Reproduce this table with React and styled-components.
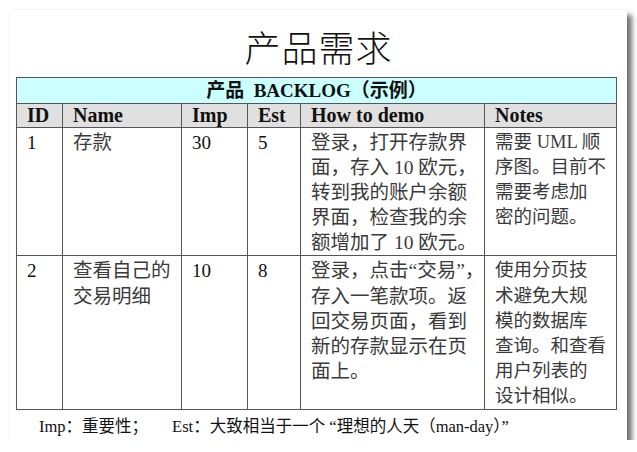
import styled, { createGlobalStyle } from "styled-components";

const GlobalStyle = createGlobalStyle`
  html, body {
    margin: 0;
    padding: 0;
    background: #ffffff;
  }
  body {
    padding-top: 10px;
    font-family: "Liberation Serif", "Noto Sans CJK SC", serif;
  }
`;

const Page = styled.div`
  margin-left: 10px;
  width: 617px;
  height: 430px;
  background: #ffffff;
  box-shadow: 5px 5px 5px rgba(0, 0, 0, 0.55), 0 0 2px rgba(0, 0, 0, 0.1);
  display: flex;
  flex-direction: column;
`;

const Title = styled.h1`
  margin: 0;
  height: 67px;
  display: flex;
  align-items: center;
  justify-content: center;
  padding-top: 4px;
  box-sizing: border-box;
  font-family: "Noto Sans CJK SC", sans-serif;
  font-weight: 300;
  font-size: 36px;
  color: #111;
  letter-spacing: 1px;
`;

const Table = styled.table`
  margin-left: 6px;
  width: 600px;
  border-collapse: collapse;
  table-layout: fixed;
  border: 1px solid #555;
`;

const Caption = styled.th`
  height: 25px;
  padding: 0;
  background: #ccffff;
  border: 1px solid #555;
  font-size: 19px;
  font-weight: bold;
  text-align: center;
  color: #111;
  line-height: 25px;
`;

const Head = styled.th`
  height: 23px;
  padding: 0 10px;
  background: #e0e0e0;
  border: 1px solid #555;
  font-size: 20px;
  font-weight: bold;
  text-align: left;
  color: #111;
  line-height: 23px;
`;

const Cell = styled.td`
  vertical-align: top;
  padding: 2px ${(p) => p.$right || 10}px 0 10px;
  border: 1px solid #555;
  font-size: ${(p) => p.$size || 19}px;
  line-height: 25.1px;
  color: #3a3a3a;
  white-space: nowrap;
`;

const Num = styled.span`
  color: #111;
`;

const Footer = styled.div`
  flex: 1;
  display: flex;
  align-items: center;
  padding-left: 29px;
  font-size: 16.5px;
  color: #111;
`;

const Note = styled.span`
  margin-left: ${(p) => p.$gap || 0}px;
  white-space: nowrap;
`;

const cols = [46, 119, 66, 53, 184, 132];

const rows = [
  {
    id: "1",
    name: ["存款"],
    imp: "30",
    est: "5",
    demo: [
      "登录，打开存款界",
      "面，存入 10 欧元，",
      "转到我的账户余额",
      "界面，检查我的余",
      "额增加了 10 欧元。",
    ],
    notes: ["需要 UML 顺", "序图。目前不", "需要考虑加", "密的问题。"],
  },
  {
    id: "2",
    name: ["查看自己的", "交易明细"],
    imp: "10",
    est: "8",
    demo: [
      "登录，点击“交易”，",
      "存入一笔款项。返",
      "回交易页面，看到",
      "新的存款显示在页",
      "面上。",
    ],
    notes: ["使用分页技", "术避免大规", "模的数据库", "查询。和查看", "用户列表的", "设计相似。"],
  },
];

const Lines = ({ items }) =>
  items.map((t, i) => (
    <div key={i}>{t}</div>
  ));

export default function App() {
  return (
    <>
      <GlobalStyle />
      <Page>
        <Title>产品需求</Title>
        <Table>
          <colgroup>
            {cols.map((w, i) => (
              <col key={i} style={{ width: w }} />
            ))}
          </colgroup>
          <thead>
            <tr>
              <Caption colSpan={6}>产品 &nbsp;BACKLOG（示例）</Caption>
            </tr>
            <tr>
              <Head>ID</Head>
              <Head>Name</Head>
              <Head>Imp</Head>
              <Head>Est</Head>
              <Head>How to demo</Head>
              <Head>Notes</Head>
            </tr>
          </thead>
          <tbody>
            {rows.map((r) => (
              <tr key={r.id}>
                <Cell><Num>{r.id}</Num></Cell>
                <Cell $size={19.5}><Lines items={r.name} /></Cell>
                <Cell><Num>{r.imp}</Num></Cell>
                <Cell><Num>{r.est}</Num></Cell>
                <Cell $size={19.5}><Lines items={r.demo} /></Cell>
                <Cell $size={18.5} $right={4}><Lines items={r.notes} /></Cell>
              </tr>
            ))}
          </tbody>
        </Table>
        <Footer>
          <Note>Imp：重要性；</Note>
          <Note $gap={24}>Est：大致相当于一个 “理想的人天（man-day）”</Note>
        </Footer>
      </Page>
    </>
  );
}
